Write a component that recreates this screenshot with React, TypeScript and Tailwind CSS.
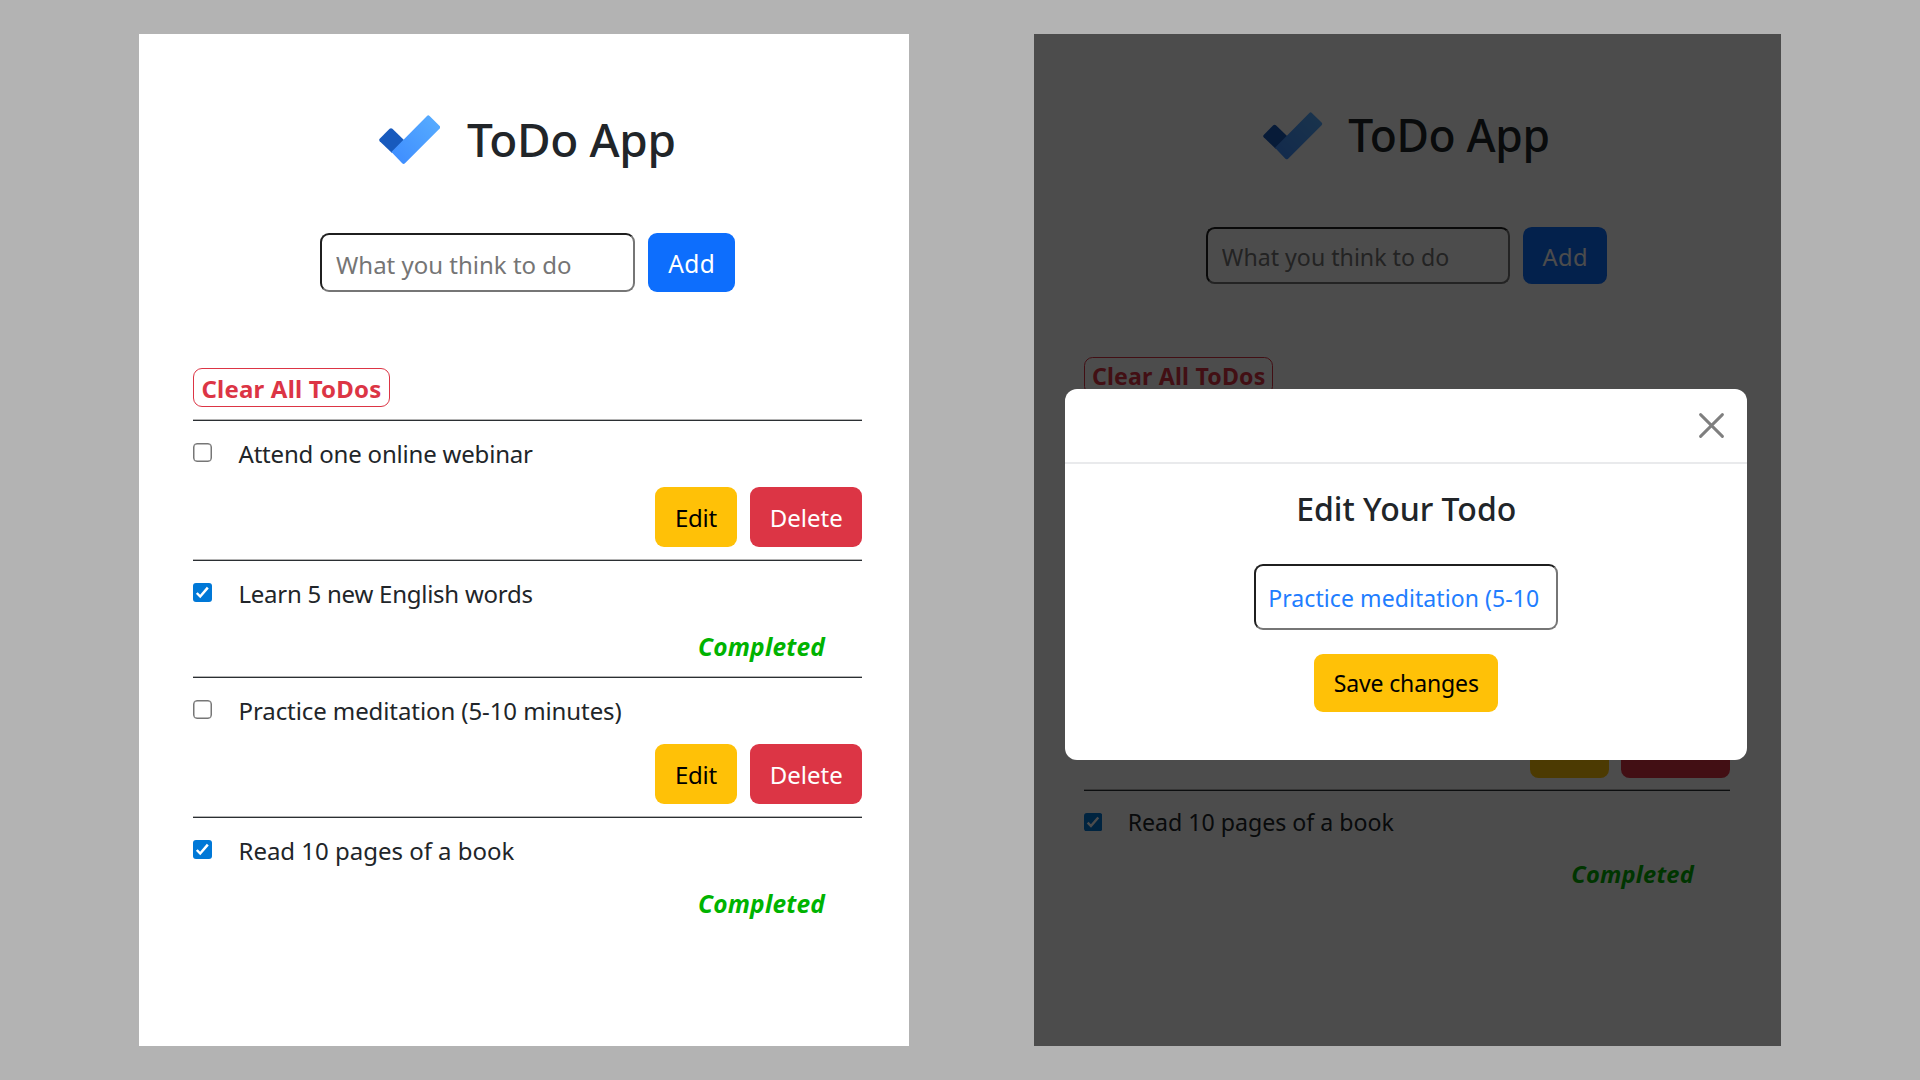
import React from "react";

type Todo = { id: number; title: string; done: boolean; spacing: string };

const todos: Todo[] = [
  { id: 1, title: "Attend one online webinar", done: false, spacing: "tracking-[-0.19px]" },
  { id: 2, title: "Learn 5 new English words", done: true, spacing: "tracking-[-0.249px]" },
  { id: 3, title: "Practice meditation (5-10 minutes)", done: false, spacing: "tracking-[-0.089px]" },
  { id: 4, title: "Read 10 pages of a book", done: true, spacing: "tracking-[-0.018px]" },
];

function Logo() {
  return (
    <svg className="mt-[6.5px] h-[49.3px] w-[61.4px] shrink-0" viewBox="0 0 61.4 49.3">
      <defs>
        <linearGradient id="tick" x1="18" y1="43" x2="56" y2="6" gradientUnits="userSpaceOnUse">
          <stop offset="0" stopColor="#408fff" />
          <stop offset="1" stopColor="#55aaff" />
        </linearGradient>
      </defs>
      <path
        d="M13 38 L.7 26.2 Q-.3 25 .7 23.8 L10.6 13.8 Q12 12.5 13.4 13.8 L26 26 Z"
        fill="#185abd"
      />
      <path
        d="M12.4 37 L48 1 Q49.3 -.3 50.6 1 L60.7 11 Q62 12.3 60.7 13.6 L26 48.3 Q24.6 49.7 23.2 48.3 Z"
        fill="url(#tick)"
      />
    </svg>
  );
}

function Checkbox({ checked }: { checked: boolean }) {
  if (!checked) {
    return (
      <i className="mt-[8px] size-[19px] shrink-0 rounded-[4px] border-[1.5px] border-[#767676] bg-white shadow-[inset_0_0_0_0.5px_#767676]" />
    );
  }
  return (
    <svg className="mt-[8px] size-[19px] shrink-0" viewBox="0 0 19 19">
      <rect width="19" height="19" rx="3" fill="#0078d7" />
      <path d="M3.8 10 L7.2 13.5 L14.8 4.6" fill="none" stroke="#fff" strokeWidth="2.5" />
    </svg>
  );
}

function TodoRow({ todo, covered }: { todo: Todo; covered: boolean }) {
  const label = covered ? "invisible" : "visible";
  return (
    <li className="border-t border-[#2b2f33] pt-[14px] pb-[13px] shadow-[0_-1px_0_#b4b4b4] last:pb-0">
      <div className="flex items-start">
        <Checkbox checked={todo.done} />
        {!covered && <span className={`ml-[26.5px] pt-px leading-[35px] ${todo.spacing}`}>{todo.title}</span>}
        {covered && <span className="h-[36px]" />}
      </div>
      {todo.done ? (
        <div className="mt-[17px] flex h-[36px] justify-end">
          {!covered && (
            <span className="w-[164px] pt-px text-[24.5px] leading-[36px] font-bold tracking-[0.2px] text-[#00b300] italic">
              Completed
            </span>
          )}
        </div>
      ) : (
        <div className="mt-[16.5px] flex justify-end gap-[12.5px]">
          <button className="h-[59.5px] w-[82px] rounded-[9px] bg-[#ffc107] pt-[1.5px] tracking-[-0.2px] text-black">
            {!covered && "Edit"}
          </button>
          <button className="h-[59.5px] w-[112.5px] rounded-[9px] bg-[#dc3545] pt-[1.5px] pl-px text-white">
            {!covered && "Delete"}
          </button>
        </div>
      )}
    </li>
  );
}

/* coveredRows: how many leading rows lie fully behind an open dialog */
function TodoApp({ coveredRows = 0 }: { coveredRows?: number }) {
  return (
    <div className="pt-[74px] text-[24px] text-[#212529]">
      <header className="flex items-start pl-[240px]">
        <Logo />
        <h1 className="ml-[26.6px] h-[60px] pt-px text-[46px] leading-[60px] font-medium tracking-[-0.38px]">ToDo App</h1>
      </header>
      <form className="mt-[65.3px] flex gap-[12.5px] pl-[181px]">
        <input
          placeholder="What you think to do"
          className="h-[59px] w-[315px] rounded-[9px] border-[2.1px] border-t-[#1f1f1f] border-r-[#767676] border-b-[#767676] border-l-[#1f1f1f] bg-white pt-[3px] pl-[14px] placeholder:text-[#757575]"
        />
        <button
          type="button"
          className="h-[59px] w-[87.5px] rounded-[9px] bg-[#0d6efd] pt-[4px] pl-px text-[24.5px] tracking-[0.4px] text-white"
        >
          Add
        </button>
      </form>
      <section className="mt-[75.7px] ml-[54px] w-[669px]">
        <button className="block h-[39px] w-[196.5px] rounded-[9px] border border-[#dc3545] pt-[2px] pl-[7.5px] text-left leading-[35px] font-bold tracking-[0.184px] text-[#dc3545]">
          Clear All ToDos
        </button>
        <ul className="mt-[13px]">
          {todos.map((todo, i) => (
            <TodoRow key={todo.id} todo={todo} covered={i < coveredRows} />
          ))}
        </ul>
      </section>
    </div>
  );
}

function EditDialog() {
  return (
    <div className="absolute top-[355px] left-[31px] h-[371px] w-[682.5px] rounded-[12px] bg-white text-[23px]">
      <div className="flex h-[75px] items-start justify-end border-b-2 border-[#e9eaec] pt-[24px] pr-[23.5px]">
        <svg className="size-[25px]" viewBox="0 0 25 25" fill="none" stroke="#7f7f7f" strokeWidth="2.9" strokeLinecap="round">
          <path d="M1.6 1.6 L23.4 23.4 M23.4 1.6 L1.6 23.4" />
        </svg>
      </div>
      <div className="flex flex-col items-center pt-[23px] pl-px">
        <h2 className="text-[32px] leading-[44px] font-medium text-[#212529]">Edit Your Todo</h2>
        <input
          readOnly
          value="Practice meditation (5-10"
          className="mt-[33px] h-[66px] w-[304px] rounded-[9px] border-2 border-t-[#1f1f1f] border-r-[#767676] border-b-[#767676] border-l-[#1f1f1f] bg-white pt-[1px] pl-[12px] tracking-[0.077px] text-[#217dff]"
        />
        <button className="mt-[24px] h-[57.5px] w-[184px] rounded-[9px] bg-[#ffc107] tracking-[-0.123px] text-black">
          Save changes
        </button>
      </div>
    </div>
  );
}

export default function App() {
  return (
    <main className="flex h-[1080px] w-[1920px] items-start overflow-hidden bg-[#b3b3b3] pt-[34px] pl-[139px] font-['Noto_Sans',sans-serif]">
      <div className="h-[1012px] w-[769.5px] bg-white">
        <TodoApp />
      </div>
      <div className="relative ml-[125px] h-[1012px] w-[747.5px] overflow-hidden bg-white">
        <div className="-ml-[2px] pt-[0.5px] [zoom:0.9655]">
          <TodoApp coveredRows={3} />
        </div>
        <div className="absolute inset-0 bg-black/70" />
        <EditDialog />
      </div>
    </main>
  );
}
